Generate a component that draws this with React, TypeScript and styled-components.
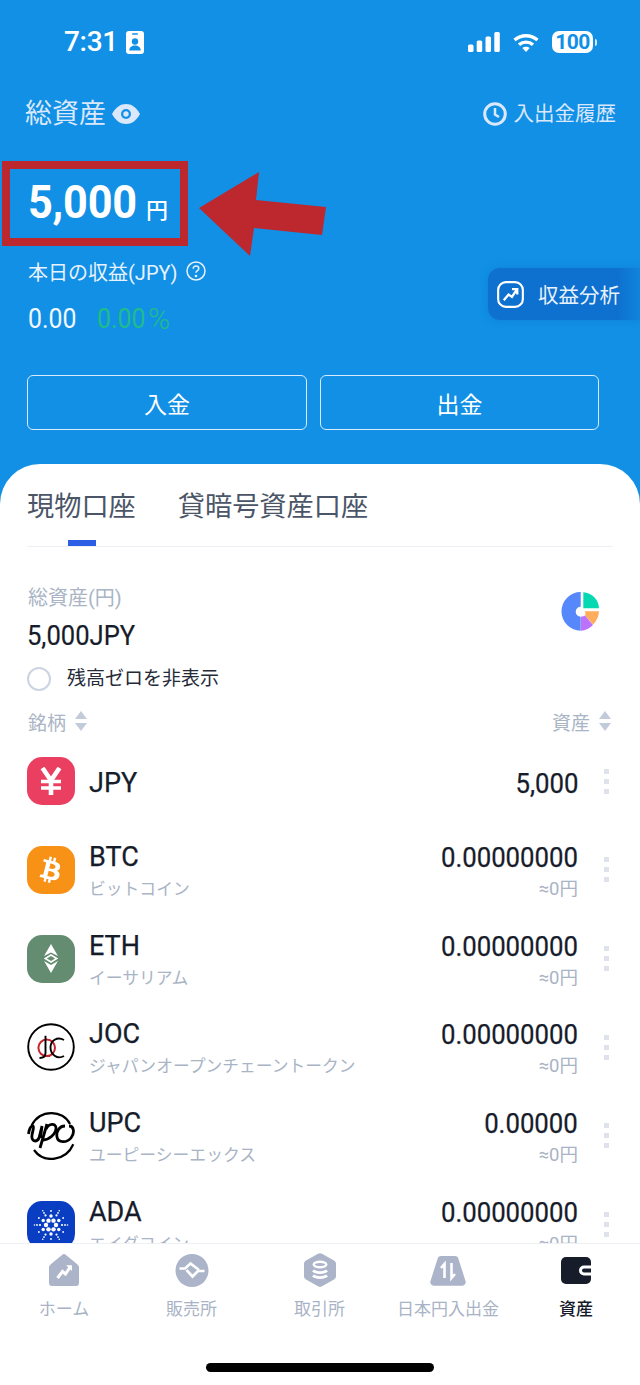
import React from 'react';
import styled, { createGlobalStyle } from 'styled-components';
import { FaBtc } from 'react-icons/fa';

const Global = createGlobalStyle`
  html, body { margin: 0; padding: 0; width: 640px; height: 1385px; overflow: hidden; background: #1190e6; }
  body { font-family: Roboto, "Noto Sans CJK JP", sans-serif; }
  * { box-sizing: border-box; }
`;

const Page = styled.div`
  width: 640px; height: 1385px; display: flex; flex-direction: column; background: #1190e6; overflow: hidden;
`;
const Header = styled.header`
  height: 464px; position: relative; flex: none; display: flex; flex-direction: column;
`;
const StatusBar = styled.div`
  height: 85px; padding: 28px 47px 0 64px; display: flex; justify-content: space-between; align-items: flex-start; color: #fff;
`;
const Time = styled.div`
  display: flex; align-items: center; gap: 8px; font-size: 28px; font-weight: 500; line-height: 28px; letter-spacing: -.3px;
`;
const StatusIcons = styled.div`
  display: flex; align-items: center; height: 28px; gap: 13px;
`;
const Battery = styled.div`
  width: 41px; height: 22px; border-radius: 7px; background: #fff; color: #1190e6; font-size: 21px; font-weight: 700; line-height: 22px; text-align: center; position: relative; letter-spacing: -.6px;
  &::after { content: ""; position: absolute; right: -4px; top: 8px; width: 2px; height: 7px; border-radius: 0 2px 2px 0; background: rgba(255,255,255,.8); }
`;
const TitleRow = styled.div`
  height: 56px; padding: 0 24px 0 25px; display: flex; justify-content: space-between; align-items: center; margin-bottom: 19px; margin-top: 1px;
`;
const Title = styled.div`
  display: flex; align-items: center; gap: 6px; font-size: 27px; color: #dbe8fb; line-height: 1;
`;
const History = styled.div`
  display: flex; align-items: center; gap: 7px; font-size: 20.5px; color: #dbe8fb; line-height: 1;
`;
const AmountBox = styled.div`
  margin-left: 2px; width: 186px; height: 85px; border: 8px solid #bd272e; display: flex; align-items: baseline; padding: 3px 0 0 18px; color: #fff; flex: none;
`;
const Amount = styled.span`
  display: inline-block; width: 108px; font-size: 46px; font-weight: 700; line-height: 60px; letter-spacing: -.2px; transform: scaleX(.94); transform-origin: left center;
`;
const Yen = styled.span`
  font-size: 22px; font-weight: 500; margin: 0 0 3px 10px; line-height: 1;
`;
const Arrow = styled.svg`
  position: absolute; left: 199px; top: 172px; width: 128px; height: 85px;
`;
const ProfitLabel = styled.div`
  margin: 12px 0 0 28px; display: flex; align-items: center; gap: 9px; height: 26px; font-size: 20px; color: #e8f2fd;
`;
const ProfitRow = styled.div`
  margin: 20px 0 0 28px; display: flex; gap: 21px; font-size: 27px; line-height: 30px; height: 30px; color: #f3f8fe;
`;
const ProfitNum = styled.span`
  display: inline-block; width: 48px; transform: scaleX(.92); transform-origin: left center;
`;
const Gain = styled.span`
  display: flex; gap: 3px; color: #1fbd88;
`;
const Percent = styled.span`
  font-weight: 300; font-size: 30px;
`;
const Analysis = styled.div`
  position: absolute; left: 488px; top: 268px; width: 152px; height: 52px; display: flex; align-items: center; gap: 14px; padding-left: 9px; color: #e8f2fd; font-size: 20.5px; background: linear-gradient(90deg, #0e70cf 85%, #1084de 100%); border-radius: 12px 0 0 12px; box-shadow: 0 0 7px 1px #0e70cf66;
`;
const Buttons = styled.div`
  margin: 41px 41px 0 27px; display: grid; grid-template-columns: 280px 279px; justify-content: space-between;
`;
const Btn = styled.div`
  height: 55px; border: 1px solid #d8ebfb; border-radius: 6px; display: flex; align-items: center; justify-content: center; color: #fff; font-size: 23px;
`;
const Sheet = styled.main`
  flex: 1; min-height: 0; background: #fff; border-radius: 40px 40px 0 0; overflow: hidden; display: flex; flex-direction: column;
`;
const Tabs = styled.div`
  margin: 0 27px 0 27px; height: 83px; flex: none; border-bottom: 1px solid #eef0f5; display: flex; gap: 42px; padding-top: 23px;
`;
const Tab = styled.div`
  position: relative; font-size: 27.2px; line-height: 40px; height: 59px; color: #4b5568;
`;
const Indicator = styled.span`
  position: absolute; left: 41px; bottom: 0; width: 28px; height: 6px; background: #2c5de5;
`;
const Summary = styled.div`
  padding: 37px 41px 0 28px; display: flex; justify-content: space-between; flex: none;
`;
const SummaryLabel = styled.div`
  font-size: 20px; line-height: 28px; color: #a9b4c5;
`;
const SummaryValue = styled.div`
  margin: 9px 0 0 -1px; font-size: 27.5px; line-height: 30px; color: #171c2b; transform: scaleX(.93); transform-origin: left center; -webkit-text-stroke: .2px #171c2b;
`;
const Pie = styled.svg`
  margin-top: 8px; width: 38px; height: 39px;
`;
const HideZero = styled.div`
  margin: 16px 0 0 27px; height: 24px; display: flex; align-items: center; gap: 16px; font-size: 19px; color: #252a38; flex: none;
`;
const Radio = styled.span`
  width: 24px; height: 24px; border-radius: 50%; border: 2px solid #ccd4e1;
`;
const HideText = styled.span`
  padding-bottom: 5px;
`;
const ListHead = styled.div`
  margin: 16px 0 2px; height: 28px; padding: 0 28px; display: flex; justify-content: space-between; align-items: center; color: #a9b4c5; font-size: 19px; flex: none;
`;
const HeadCell = styled.div`
  display: flex; align-items: center; gap: 8px;
`;
const Row = styled.div`
  height: 88.67px; flex: none; padding: 0 27px; display: grid; grid-template-columns: 48px 1fr auto 35px; align-items: center;
`;
const CoinIcon = styled.div<{ $bg: string }>`
  width: 48px; height: 48px; border-radius: 15px; background: ${p => p.$bg}; display: flex; align-items: center; justify-content: center; color: #fff;
`;
const Names = styled.div`
  margin-left: 14px; padding-top: 5px; display: flex; flex-direction: column; gap: 6px;
`;
const Symbol = styled.div`
  font-size: 27px; line-height: 27px; color: #171c2b; -webkit-text-stroke: .25px #171c2b;
`;
const Sub = styled.div`
  font-size: 16.8px; line-height: 24px; color: #a9b4c5; white-space: nowrap;
`;
const Vals = styled.div`
  padding-top: 5px; display: flex; flex-direction: column; gap: 6px; align-items: flex-end;
`;
const Val = styled.div`
  font-size: 28px; line-height: 27px; color: #171c2b; transform: scaleX(.92); transform-origin: right center; white-space: nowrap; -webkit-text-stroke: .25px #171c2b;
`;
const ValSub = styled.div`
  font-size: 18.5px; line-height: 24px; color: #a9b4c5; white-space: nowrap;
`;
const Dots = styled.div`
  justify-self: start; margin-left: 26px; display: flex; flex-direction: column; gap: 5px;
  span { display: block; width: 5px; height: 5px; background: #dfe2ea; }
`;
const TabBar = styled.nav`
  height: 142px; flex: none; background: #fff; border-top: 1px solid #eef0f6; position: relative; padding-top: 9px; display: grid; grid-template-columns: 128px 127px 129px 128px 128px;
`;
const NavItem = styled.div<{ $on?: boolean }>`
  display: flex; flex-direction: column; align-items: center; font-size: 17px; color: ${p => p.$on ? '#171c2b' : '#a9b3c5'}; font-weight: ${p => p.$on ? 500 : 400};
  svg { display: block; }
  span { margin-top: 8px; line-height: 24px; white-space: nowrap; }
`;
const HomeBar = styled.div`
  position: absolute; left: 206px; top: 119px; width: 228px; height: 9px; border-radius: 5px; background: #000;
`;
const Slanted = styled.span`
  display: flex; transform: rotate(14deg);
`;

const IdIcon = () => (
  <svg width="18" height="23" viewBox="0 0 18 23">
    <rect width="18" height="23" rx="3" fill="#fff" />
    <rect x="6" y="2.2" width="6" height="1.6" rx=".8" fill="#1190e6" />
    <circle cx="9" cy="10.5" r="3.2" fill="#1190e6" />
    <path d="M3.2 19.5c.3-3.6 2.8-5 5.8-5s5.5 1.4 5.8 5z" fill="#1190e6" />
  </svg>
);
const Signal = () => (
  <svg width="32" height="20" viewBox="0 0 32 20" fill="#fff">
    <rect x="0" y="12.5" width="5.5" height="7.5" rx="1.5" />
    <rect x="8.7" y="8.5" width="5.5" height="11.5" rx="1.5" />
    <rect x="17.5" y="4.5" width="5.5" height="15.5" rx="1.5" />
    <rect x="26.3" y="0" width="5.5" height="20" rx="1.5" />
  </svg>
);
const Wifi = () => (
  <svg width="26" height="19" viewBox="0 0 26 19" fill="none" stroke="#fff" strokeWidth="3.4">
    <path d="M1.5 7c6.5-5.700 16.500-5.700 23 0" />
    <path d="M6 11.700c4-3.500 10-3.500 14 0" />
    <path d="M13 19l-3.700-4c2.100-1.800 5.300-1.800 7.400 0z" fill="#fff" stroke="none" />
  </svg>
);
const Eye = () => (
  <svg width="28" height="20" viewBox="0 0 28 20">
    <path d="M0 10C4 3 8.5 0 14 0s10 3 14 10c-4 7-8.5 10-14 10S4 17 0 10z" fill="#dbe8fb" />
    <circle cx="14" cy="10" r="5" fill="#1190e6" />
    <circle cx="14" cy="10" r="2.7" fill="#dbe8fb" />
  </svg>
);
const Clock = () => (
  <svg width="24" height="24" viewBox="0 0 24 24" fill="none" stroke="#dbe8fb" strokeWidth="3">
    <circle cx="12" cy="12" r="10.3" />
    <path d="M12 6v6.500l4 2.500" strokeWidth="2.5" />
  </svg>
);
const Help = () => (
  <svg width="20" height="20" viewBox="0 0 20 20" fill="none" stroke="#e8f2fd" strokeWidth="1.5">
    <circle cx="10" cy="10" r="9" />
    <path d="M7.2 7.700c0-1.600 1.200-2.600 2.800-2.600s2.800 1 2.800 2.400c0 2.200-2.800 2.100-2.800 4.300" />
    <circle cx="10" cy="15" r=".6" fill="#e8f2fd" />
  </svg>
);
const Trend = () => (
  <svg width="27" height="27" viewBox="0 0 28 28" fill="none" stroke="#fff" strokeWidth="2.2">
    <rect x="1.2" y="1.2" width="25.6" height="25.6" rx="8" />
    <path d="M7 20l5-6 3.500 2.500L20.500 9" strokeWidth="2.4" />
    <path d="M15.500 8.500h5.500V14" strokeWidth="2.4" />
  </svg>
);
const Sort = () => (
  <svg width="14" height="20" viewBox="0 0 14 20" fill="#c2cbd9">
    <path d="M7 0l6 8H1zM7 20l-6-8h12z" />
  </svg>
);
const YenIcon = () => (
  <svg width="22" height="28" viewBox="0 0 22 28" fill="none" stroke="#fff" strokeWidth="4.6">
    <path d="M2.500 1l8.500 12.500L19.500 1M11 13v15" />
    <path d="M1 14.500h20M1 21h20" strokeWidth="3.4" />
  </svg>
);
const EthIcon = () => (
  <svg width="18" height="29" viewBox="0 0 26 36" fill="#fff" preserveAspectRatio="none">
    <path d="M13 0l10 15-10-4.500L3 15z" />
    <path d="M13 12.500l10.500 5.500-10.500 5.500L2.500 18zM13 15l-6 3 6 3 6-3z" fillRule="evenodd" />
    <path d="M3 21l10 5 10-5-10 15z" />
  </svg>
);
const JocLogo = () => (
  <svg width="48" height="48" viewBox="0 0 48 48" fill="none" stroke="#000" strokeWidth="1.9">
    <circle cx="24" cy="24" r="22.8" />
    <circle cx="19.7" cy="24.8" r="8.3" stroke="#c8232c" strokeWidth="2" />
    <path d="M18.500 12.700V30c0 3-2 5-6 5" />
    <path d="M37 17c-7-4-13.500 1-13.500 7.500S30 37 37 33" />
  </svg>
);
const UpcLogo = () => (
  <svg width="48" height="48" viewBox="0 0 48 48" fill="none" stroke="#000" strokeWidth="2.2">
    <path d="M4.700 13.300C13-3 36-2.500 43 12" />
    <path d="M46.300 32.300C39 49 17 52 7 38" />
    <g strokeWidth="2.8">
      <path d="M1.500 22C2 17 4 13.500 6 14c2 1-2 8-1 12 1 4 5 4 7 0l3-12-1.500 12" />
      <path d="M20 12l-7 24" />
      <path d="M19 17c3-6 10-6 10-1 0 6-7 12-13 12" />
      <path d="M38 14c-6 0-9 6-8 11 1 6 10 6 14 1 4-5 3-12-2-12" />
    </g>
  </svg>
);
const AdaIcon = () => {
  const dots: React.ReactElement[] = [];
  [[5, 2.2, 6], [9, 1.7, 6], [11, 1.1, 6], [14, .9, 12], [16.5, .8, 6]].forEach(([r, s, n], i) => {
    for (let k = 0; k < n; k++) {
      const a = (Math.PI * 2 * k) / n + (i % 2 ? Math.PI / 6 : 0);
      dots.push(<circle key={`${i}-${k}`} cx={24 + r * Math.cos(a)} cy={24 + r * Math.sin(a)} r={s} fill="#fff" />);
    }
  });
  return <svg width="48" height="48" viewBox="0 0 48 48">{dots}</svg>;
};

const coins = [
  { sym: 'BTC', sub: 'ビットコイン', val: '0.00000000', bg: '#f89217', icon: <Slanted><FaBtc size={26} /></Slanted> },
  { sym: 'ETH', sub: 'イーサリアム', val: '0.00000000', bg: '#648c70', icon: <EthIcon /> },
  { sym: 'JOC', sub: 'ジャパンオープンチェーントークン', val: '0.00000000', bg: 'transparent', icon: <JocLogo /> },
  { sym: 'UPC', sub: 'ユーピーシーエックス', val: '0.00000', bg: 'transparent', icon: <UpcLogo /> },
  { sym: 'ADA', sub: 'エイダコイン', val: '0.00000000', bg: '#0a3ec2', icon: <AdaIcon /> },
];

const More = () => <Dots><span /><span /><span /></Dots>;

const G = '#abb4c8';

export default function App() {
  return (
    <Page>
      <Global />
      <Header>
        <StatusBar>
          <Time>7:31<IdIcon /></Time>
          <StatusIcons><Signal /><Wifi /><Battery>100</Battery></StatusIcons>
        </StatusBar>
        <TitleRow>
          <Title>総資産<Eye /></Title>
          <History><Clock />入出金履歴</History>
        </TitleRow>
        <AmountBox><Amount>5,000</Amount><Yen>円</Yen></AmountBox>
        <ProfitLabel>本日の収益(JPY)<Help /></ProfitLabel>
        <ProfitRow><ProfitNum>0.00</ProfitNum><Gain><ProfitNum>0.00</ProfitNum><Percent>%</Percent></Gain></ProfitRow>
        <Buttons><Btn>入金</Btn><Btn>出金</Btn></Buttons>
        <Arrow viewBox="0 0 128 85">
          <polygon points="0,36 60,0 57,28 127,35 123,63 55,56 51,84" fill="#bd272e" />
        </Arrow>
        <Analysis><Trend />収益分析</Analysis>
      </Header>
      <Sheet>
        <Tabs>
          <Tab>現物口座<Indicator /></Tab>
          <Tab>貸暗号資産口座</Tab>
        </Tabs>
        <Summary>
          <div>
            <SummaryLabel>総資産(円)</SummaryLabel>
            <SummaryValue>5,000JPY</SummaryValue>
          </div>
          <Pie viewBox="0 0 38 39">
            <path d="M19.700 0A19.200 19.400 0 1 0 19.700 38.800V24.700A5 5 0 0 1 19.700 14.700z" fill="#5687fb" />
            <path d="M22.300.3A16.500 16.500 0 0 1 38 16.300H22.300z" fill="#06d8b2" />
            <path d="M23.800 19.300H38A19 19 0 0 1 32 32.500L24.200 23.700c.4-1.400.2-3-.4-4.400z" fill="#ffad5b" />
            <path d="M20 24.700c1.500 0 3-.5 4-1.200L32 33a19 19 0 0 1-12 5.800z" fill="#bd72fb" />
          </Pie>
        </Summary>
        <HideZero><Radio /><HideText>残高ゼロを非表示</HideText></HideZero>
        <ListHead>
          <HeadCell>銘柄<Sort /></HeadCell>
          <HeadCell>資産<Sort /></HeadCell>
        </ListHead>
        <Row>
          <CoinIcon $bg="#eb3f62"><YenIcon /></CoinIcon>
          <Names><Symbol>JPY</Symbol></Names>
          <Vals><Val>5,000</Val></Vals>
          <More />
        </Row>
        {coins.map(c => (
          <Row key={c.sym}>
            <CoinIcon $bg={c.bg}>{c.icon}</CoinIcon>
            <Names><Symbol>{c.sym}</Symbol><Sub>{c.sub}</Sub></Names>
            <Vals><Val>{c.val}</Val><ValSub>≈0円</ValSub></Vals>
            <More />
          </Row>
        ))}
      </Sheet>
      <TabBar>
        <NavItem>
          <svg width="30" height="36" viewBox="0 0 30 36">
            <path d="M13 2a3 3 0 0 1 4 0l11.500 9.500a4 4 0 0 1 1.500 3V30a3 3 0 0 1-3 3H3a3 3 0 0 1-3-3V14.500a4 4 0 0 1 1.500-3z" fill={G} />
            <path d="M8.500 25l5-6.500 3 2.500 5-7.500" fill="none" stroke="#fff" strokeWidth="3" />
            <path d="M17 12.300h6V18z" fill="#fff" />
          </svg>
          <span>ホーム</span>
        </NavItem>
        <NavItem>
          <svg width="34" height="36" viewBox="0 0 34 36">
            <circle cx="17" cy="17.500" r="16.500" fill={G} />
            <path d="M4.500 15.500H10l5.500-5 8.500 6.500" fill="none" stroke="#fff" strokeWidth="2.600" />
            <path d="M11.500 17l6 6.500 5.500-5.500h6.500" fill="none" stroke="#fff" strokeWidth="2.600" />
          </svg>
          <span>販売所</span>
        </NavItem>
        <NavItem>
          <svg width="32" height="36" viewBox="0 0 32 36">
            <path d="M14 .8a4 4 0 0 1 4 0l12 6.700a3.500 3.500 0 0 1 2 3v13a3.500 3.500 0 0 1-2 3l-12 6.700a4 4 0 0 1-4 0L2 26.500a3.500 3.500 0 0 1-2-3v-13a3.500 3.500 0 0 1 2-3z" fill={G} />
            <ellipse cx="16" cy="11.500" rx="6.300" ry="2.800" fill="none" stroke="#fff" strokeWidth="2.400" />
            <path d="M9 17.500c3 2.800 11 2.800 14 0M9 22.500c3 2.800 11 2.800 14 0" fill="none" stroke="#fff" strokeWidth="2.800" />
          </svg>
          <span>取引所</span>
        </NavItem>
        <NavItem>
          <svg width="36" height="36" viewBox="0 0 36 36">
            <path d="M11 3h14a3.500 3.500 0 0 1 3.400 2.700L35.500 28a3.500 3.500 0 0 1-3.400 4.700H3.900A3.500 3.500 0 0 1 .5 28L7.600 5.700A3.500 3.500 0 0 1 11 3z" fill={G} />
            <path d="M14.500 25V11l-3.500 4M21.500 10v15l3.500-4" fill="none" stroke="#fff" strokeWidth="2.600" />
          </svg>
          <span>日本円入出金</span>
        </NavItem>
        <NavItem $on>
          <svg width="30" height="36" viewBox="0 0 30 36">
            <rect x="0" y="4" width="30" height="27" rx="5" fill="#171c2b" />
            <path d="M30 14h-7a3.500 3.500 0 0 0 0 7h7" fill="none" stroke="#fff" strokeWidth="3" />
          </svg>
          <span>資産</span>
        </NavItem>
        <HomeBar />
      </TabBar>
    </Page>
  );
}
